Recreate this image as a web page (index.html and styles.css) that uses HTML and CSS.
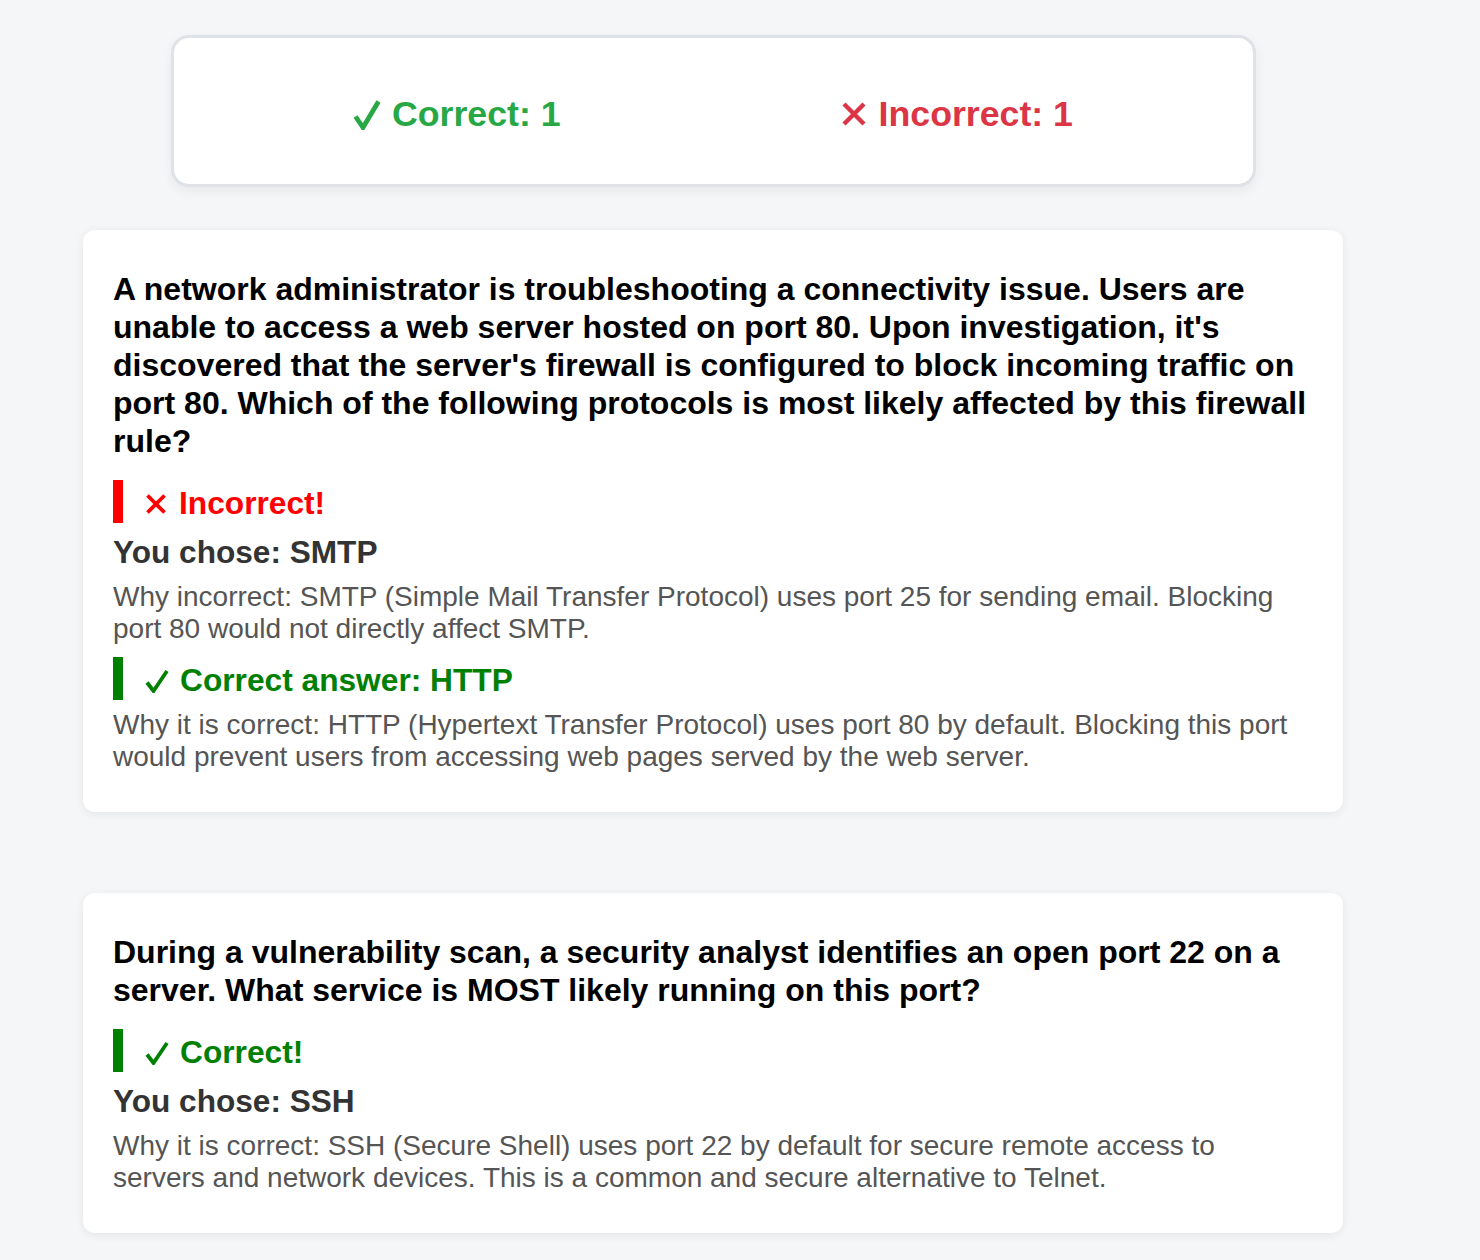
FILE: index.html
```html
<!DOCTYPE html>
<html lang="en">
<head>
<meta charset="utf-8">
<title>Quiz Results</title>
<link rel="stylesheet" href="styles.css">
</head>
<body>
<main class="results">
  <section class="summary">
    <div class="summary-item ok">
      <svg class="icon icon-check-lg" viewBox="0 0 28 31" aria-hidden="true"><path d="M2.5 17.5 L10 28.5 L25.5 2.5"/></svg>
      <span>Correct: 1</span>
    </div>
    <div class="summary-item bad">
      <svg class="icon icon-x-lg" viewBox="0 0 26 26" aria-hidden="true"><path d="M3 3 L23 23 M23 3 L3 23"/></svg>
      <span>Incorrect: 1</span>
    </div>
  </section>

  <article class="card">
    <h2 class="question">A network administrator is troubleshooting a connectivity issue. Users are unable to access a web server hosted on port 80. Upon investigation, it's discovered that the server's firewall is configured to block incoming traffic on port 80. Which of the following protocols is most likely affected by this firewall rule?</h2>
    <h3 class="verdict bad">
      <svg class="icon icon-x" viewBox="0 0 22 22" aria-hidden="true"><path d="M2.5 2.5 L19.5 19.5 M19.5 2.5 L2.5 19.5"/></svg>
      <span>Incorrect!</span>
    </h3>
    <p class="chose">You chose: SMTP</p>
    <p class="explain">Why incorrect: SMTP (Simple Mail Transfer Protocol) uses port 25 for sending email. Blocking port 80 would not directly affect SMTP.</p>
    <h3 class="verdict ok answer">
      <svg class="icon icon-check" viewBox="0 0 24 24" aria-hidden="true"><path d="M2 13.5 L8.5 22 L22 2"/></svg>
      <span>Correct answer: HTTP</span>
    </h3>
    <p class="explain after-verdict">Why it is correct: HTTP (Hypertext Transfer Protocol) uses port 80 by default. Blocking this port would prevent users from accessing web pages served by the web server.</p>
  </article>

  <article class="card">
    <h2 class="question">During a vulnerability scan, a security analyst identifies an open port 22 on a server. What service is MOST likely running on this port?</h2>
    <h3 class="verdict ok">
      <svg class="icon icon-check" viewBox="0 0 24 24" aria-hidden="true"><path d="M2 13.5 L8.5 22 L22 2"/></svg>
      <span>Correct!</span>
    </h3>
    <p class="chose">You chose: SSH</p>
    <p class="explain">Why it is correct: SSH (Secure Shell) uses port 22 by default for secure remote access to servers and network devices. This is a common and secure alternative to Telnet.</p>
  </article>
</main>
</body>
</html>
```

FILE: styles.css
```css
html, body {
  margin: 0;
  padding: 0;
}

body {
  background: #f5f6f8;
  font-family: "Liberation Sans", Arial, sans-serif;
  color: #000;
}

.results {
  width: 1260px;
  margin-left: 83px;
  padding-top: 35px;
  display: flex;
  flex-direction: column;
  align-items: center;
}

.icon {
  flex: none;
  fill: none;
  stroke: currentColor;
  stroke-linecap: butt;
  stroke-linejoin: miter;
}

/* summary */
.summary {
  box-sizing: border-box;
  width: 1085px;
  height: 152px;
  background: #fff;
  border: 3px solid #dfe2e6;
  border-radius: 18px;
  box-shadow: 0 4px 12px rgba(0, 0, 0, 0.06);
  display: flex;
  justify-content: center;
  align-items: center;
  gap: 280px;
  margin-bottom: 43px;
}

.summary-item {
  display: flex;
  align-items: center;
  font-size: 35.7px;
  font-weight: bold;
  padding-top: 6px;
}

.summary-item.ok { color: #28a745; gap: 11px; }
.summary-item.bad { color: #dc3545; gap: 12px; }

.icon-check-lg {
  width: 28px;
  height: 31px;
  stroke-width: 4.8;
}

.icon-x-lg {
  width: 26px;
  height: 26px;
  stroke-width: 4.4;
}

/* cards */
.card {
  box-sizing: border-box;
  width: 1260px;
  background: #fff;
  border-radius: 12px;
  box-shadow: 0 2px 10px rgba(0, 0, 0, 0.07);
  padding: 40px 30px 39px 30px;
  margin-bottom: 81px;
}

.question {
  margin: 0 0 20px 0;
  font-size: 32px;
  line-height: 38px;
  font-weight: bold;
  color: #000;
}

.verdict {
  margin: 0;
  display: flex;
  align-items: center;
  font-size: 31.7px;
  font-weight: bold;
  line-height: 37px;
  padding: 5px 0 1px 22px;
  border-left: 10px solid;
}

.verdict.bad { color: #ff0000; border-color: #ff0000; gap: 12px; }
.verdict.ok { color: #008000; border-color: #008000; gap: 11px; }

.icon-check {
  width: 24px;
  height: 24px;
  stroke-width: 3.8;
}

.icon-x {
  width: 22px;
  height: 22px;
  stroke-width: 3.8;
}

.verdict.answer {
  margin-top: 12px;
}

.chose {
  margin: 11px 0 0 0;
  font-size: 31.6px;
  font-weight: bold;
  line-height: 37px;
  color: #333;
}

.explain {
  margin: 10px 0 0 0;
  font-size: 28px;
  line-height: 32px;
  color: #555;
}

.explain.after-verdict {
  margin-top: 9px;
}
```
